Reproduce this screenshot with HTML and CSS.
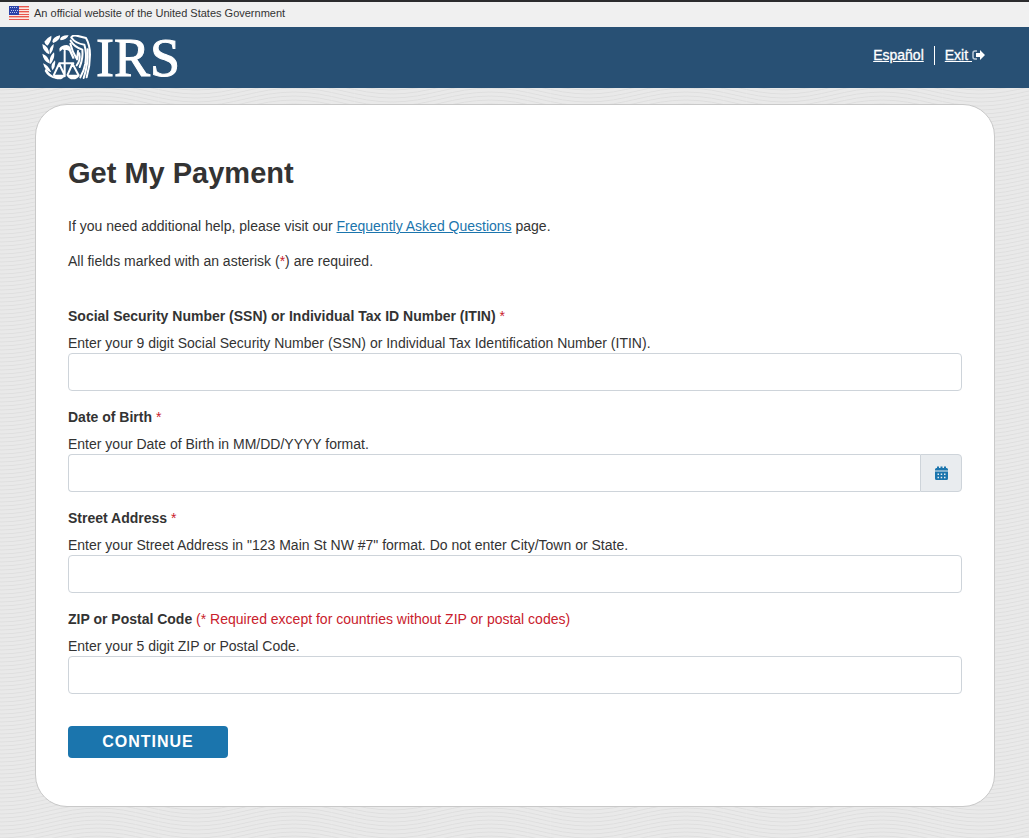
FILE: index.html
```html
<!DOCTYPE html>
<html lang="en">
<head>
<meta charset="utf-8">
<meta name="viewport" content="width=device-width, initial-scale=1">
<title>Get My Payment</title>
<link rel="stylesheet" href="styles.css">
</head>
<body>
<div class="gov-banner">
  <svg class="flag" viewBox="0 0 20 14" aria-hidden="true">
    <path fill="#fbe9e4" d="M0 0h20v14H0z"/>
    <path fill="#e8574f" d="M0 0h20v1H0zM0 3h20v1H0zM0 5h20v1H0zM0 8h20v1H0zM0 10h20v1H0zM0 13h20v1H0z"/>
    <path fill="#f5b5a8" d="M0 1h20v1H0zM0 6h20v1H0zM0 11h20v1H0z"/>
    <path fill="#2b42a8" d="M0 0h10v9H0z"/>
    <path stroke="#b9c4ee" stroke-dasharray="1 1" d="M1 1.500h8M2 4.500h7M1 6.500h8"/>
  </svg>
  <span>An official website of the United States Government</span>
</div>
<header class="site-header">
  <a class="logo" href="#" aria-label="IRS">
    <svg class="emblem" viewBox="18 18 150 138" aria-hidden="true">
      <g fill="#fff">
        <path d="M19 45Q38 52 40 76Q20 68 19 45ZM19 74Q38 80 42 104Q22 98 19 74ZM21 103Q36 108 46 130Q27 126 21 103ZM25 38Q36 24 46 20Q48 36 34 50Q27 46 25 38ZM49 38Q50 24 72 19Q74 33 52 42ZM72 30Q78 17 98 19Q92 32 74 34ZM53 45Q54 62 42 76Q36 58 53 45ZM54 70Q58 88 43 106Q36 86 54 70ZM57 94Q60 110 50 124Q40 110 57 94Z"/>
        <path d="M30 118Q42 140 62 146V150Q36 146 26 126Z"/>
        <path d="M50 137H88Q82 151 69 151Q56 151 50 137ZM91 137H132Q125 151 111 151Q98 151 91 137Z"/>
        <path d="M70 59Q76 48 92 48Q104 50 105 62L116 88L110 90L99 66Q91 60 86 65L80 61L71 68Z"/>
      </g>
      <g fill="none" stroke="#fff" stroke-width="6" stroke-linejoin="round" stroke-linecap="round">
        <path d="M86 66V142M70 103H112M69 105L54 137M70 105L85 137M109 105L95 137M110 105L127 137"/>
        <path d="M106 25Q110 18 122 20L150 27Q162 48 162 77Q162 112 152 145"/>
        <path d="M107 27Q118 43 145 47Q153 72 148 104Q144 126 133 145"/>
        <path d="M104 35Q113 52 139 62Q142 88 131 114"/>
        <path d="M103 44Q108 67 123 91L126 66M130 73Q134 95 122 109"/>
        <path d="M155 61Q157 105 143 147"/>
      </g>
    </svg>
    <span class="wordmark">IRS</span>
  </a>
  <nav class="links" aria-label="Site">
    <a href="#">Español</a>
    <a class="exit" href="#">Exit <svg viewBox="0 0 13 10" aria-hidden="true"><path fill="none" stroke="#b9c9d8" stroke-width="1.500" d="M5 1H3Q1 1 1 3V7Q1 9 3 9H5"/><path fill="#fff" d="M4 3h4V0l5 5-5 5V7H4z"/></svg></a>
  </nav>
</header>
<main class="card">
  <h1>Get My Payment</h1>
  <p>If you need additional help, please visit our <a href="#">Frequently Asked Questions</a> page.</p>
  <p>All fields marked with an asterisk (<span class="req">*</span>) are required.</p>
  <form>
    <div class="field">
      <label for="ssn">Social Security Number (SSN) or Individual Tax ID Number (ITIN) <span class="req">*</span></label>
      <div class="hint" id="ssn-hint">Enter your 9 digit Social Security Number (SSN) or Individual Tax Identification Number (ITIN).</div>
      <input class="text-box" id="ssn" type="text" aria-describedby="ssn-hint">
    </div>
    <div class="field">
      <label for="dob">Date of Birth <span class="req">*</span></label>
      <div class="hint" id="dob-hint">Enter your Date of Birth in MM/DD/YYYY format.</div>
      <div class="group">
        <input class="text-box" id="dob" type="text" aria-describedby="dob-hint">
        <button class="calendar" type="button" aria-label="Choose date"><svg viewBox="0 0 13 14" aria-hidden="true"><path fill="#1b75ad" d="M0 3.500Q0 2 1.500 2H2V.5h2V2h1.500V.5h2V2H9V.5h2V2h.5Q13 2 13 3.500V4.500H0ZM0 5.500H13V12.500Q13 14 11.500 14H1.500Q0 14 0 12.500Z"/><path fill="#e9ecef" d="M2.500 7.500h1.500v1.500h-1.500zM5.700 7.500h1.500v1.500h-1.500zM9 7.500h1.500v1.500h-1.500zM2.500 10.700h1.500v1.500h-1.500zM5.700 10.700h1.500v1.500h-1.500zM9 10.700h1.500v1.500h-1.500z"/></svg></button>
      </div>
    </div>
    <div class="field">
      <label for="street">Street Address <span class="req">*</span></label>
      <div class="hint" id="street-hint">Enter your Street Address in "123 Main St NW #7" format. Do not enter City/Town or State.</div>
      <input class="text-box" id="street" type="text" aria-describedby="street-hint">
    </div>
    <div class="field">
      <label for="zip">ZIP or Postal Code <span class="req">(* Required except for countries without ZIP or postal codes)</span></label>
      <div class="hint" id="zip-hint">Enter your 5 digit ZIP or Postal Code.</div>
      <input class="text-box" id="zip" type="text" aria-describedby="zip-hint">
    </div>
    <button class="continue" type="submit">CONTINUE</button>
  </form>
</main>
</body>
</html>
```
FILE: styles.css
```css
* {
  box-sizing: border-box;
}

body {
  margin: 0;
  color: #333;
  font: 14px/21px "Liberation Sans", Arial, sans-serif;
  background: #e9e9e9 url("data:image/svg+xml,%3Csvg xmlns='http://www.w3.org/2000/svg' width='196' height='4'%3E%3Cpath fill='none' stroke='%23dfdfdf' d='M0 -14C36 -14 62 -28 98 -28S160 -14 196 -14M0 -10C36 -10 62 -24 98 -24S160 -10 196 -10M0 -6C36 -6 62 -20 98 -20S160 -6 196 -6M0 -2C36 -2 62 -16 98 -16S160 -2 196 -2M0 2C36 2 62 -12 98 -12S160 2 196 2M0 6C36 6 62 -8 98 -8S160 6 196 6M0 10C36 10 62 -4 98 -4S160 10 196 10M0 14C36 14 62 0 98 0S160 14 196 14M0 18C36 18 62 4 98 4S160 18 196 18'/%3E%3C/svg%3E");
}

.gov-banner {
  display: flex;
  align-items: center;
  gap: 5px;
  height: 27px;
  padding: 0 0 3px 9px;
  border-top: 2px solid #2b2b2d;
  background: #f0f0f0;
  font-size: 11px;
  line-height: 16px;
}

.flag {
  width: 20px;
  height: 14px;
}

.site-header {
  display: flex;
  align-items: center;
  justify-content: space-between;
  height: 61px;
  padding: 0 44px 0 42px;
  background: #285074;
  color: #fff;
}

.site-header a {
  color: #fff;
}

.logo {
  display: flex;
  align-items: center;
  gap: 4px;
  text-decoration: none;
}

.emblem {
  width: 50px;
  height: 46px;
}

.wordmark {
  font: 54px/56px "Liberation Serif", "Times New Roman", serif;
  -webkit-text-stroke: 1px #fff;
}

.links {
  display: flex;
  line-height: 19px;
  padding-bottom: 4px;
  -webkit-text-stroke: 0.3px #fff;
}

.exit {
  margin-left: 10px;
  padding-left: 10px;
  border-left: 1px solid #fff;
}

.exit svg {
  width: 13px;
  height: 10px;
}

.card {
  margin: 16px 34px 31px 35px;
  padding: 50px 32px 48px;
  border: 1px solid #c9c9c9;
  border-radius: 32px;
  background: #fff;
}

h1 {
  margin: 0 0 25px;
  font-size: 29px;
  line-height: 36px;
}

p {
  margin: 0 0 14px;
}

.card a {
  color: #1b75ad;
}

.req {
  color: #c9202c;
  font-weight: 400;
}

form {
  margin-top: 34px;
}

.field {
  margin-bottom: 16px;
}

label {
  display: block;
  margin-bottom: 6px;
  font-weight: 700;
}

.hint {
  line-height: 20px;
}

.text-box {
  display: block;
  width: 100%;
  height: 38px;
  padding: 6px 12px;
  border: 1px solid #ced4da;
  border-radius: 4px;
  background: #fff;
  font: inherit;
}

.group {
  display: flex;
}

.group .text-box {
  flex: 1;
  border-right: 0;
  border-radius: 4px 0 0 4px;
}

.calendar {
  display: flex;
  align-items: center;
  justify-content: center;
  width: 42px;
  height: 38px;
  padding: 0;
  border: 1px solid #ced4da;
  border-radius: 0 4px 4px 0;
  background: #e9ecef;
}

.calendar svg {
  width: 13px;
  height: 14px;
}

.continue {
  display: block;
  width: 160px;
  height: 32px;
  margin-top: 32px;
  padding: 0;
  border: 0;
  border-radius: 4px;
  background: #1b75ad;
  color: #fff;
  font: 700 16px/24px "Liberation Sans", Arial, sans-serif;
  letter-spacing: 1px;
}
```
